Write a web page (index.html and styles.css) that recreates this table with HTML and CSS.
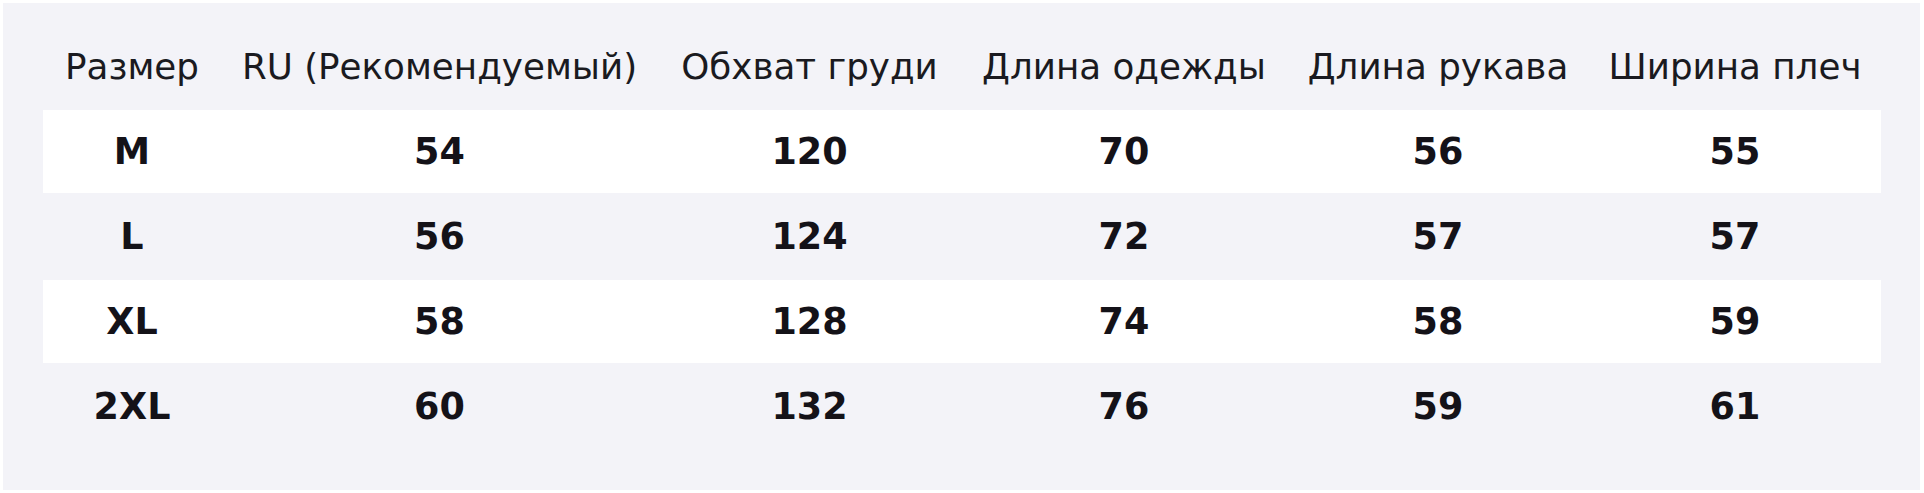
FILE: index.html
```html
<!DOCTYPE html>
<html lang="ru">
<head>
<meta charset="utf-8">
<title>Размерная таблица</title>
<link rel="stylesheet" href="styles.css">
</head>
<body>
<div class="panel">
  <table class="sizes">
    <colgroup>
      <col class="c-size">
      <col class="c-ru">
      <col class="c-chest">
      <col class="c-length">
      <col class="c-sleeve">
      <col class="c-shoulder">
    </colgroup>
    <thead>
      <tr>
        <th>Размер</th>
        <th>RU (Рекомендуемый)</th>
        <th>Обхват груди</th>
        <th>Длина одежды</th>
        <th>Длина рукава</th>
        <th>Ширина плеч</th>
      </tr>
    </thead>
    <tbody>
      <tr class="odd"><td>M</td><td>54</td><td>120</td><td>70</td><td>56</td><td>55</td></tr>
      <tr><td>L</td><td>56</td><td>124</td><td>72</td><td>57</td><td>57</td></tr>
      <tr class="odd"><td>XL</td><td>58</td><td>128</td><td>74</td><td>58</td><td>59</td></tr>
      <tr><td>2XL</td><td>60</td><td>132</td><td>76</td><td>59</td><td>61</td></tr>
    </tbody>
  </table>
</div>
</body>
</html>
```

FILE: styles.css
```css
html, body {
  margin: 0;
  padding: 0;
  background: #ffffff;
}

body {
  padding: 3px 4px 3px 3px;
  font-family: "DejaVu Sans", sans-serif;
  color: #16161c;
}

.panel {
  background: #f3f3f8;
  padding: 20px 39px 40px 40px;
  height: 487px;
  box-sizing: border-box;
}

.sizes {
  width: 1838px;
  table-layout: fixed;
  border-collapse: separate;
  border-spacing: 0 2px;
}

.c-size { width: 178px; }
.c-ru { width: 437px; }
.c-chest { width: 303px; }
.c-length { width: 326px; }
.c-sleeve { width: 302px; }
.c-shoulder { width: 292px; }

.sizes th,
.sizes td {
  height: 83px;
  padding: 0;
  text-align: center;
  vertical-align: middle;
  white-space: nowrap;
}

.sizes th {
  font-size: 35.7px;
  font-weight: normal;
  color: #1a1a20;
}

.sizes td {
  font-size: 36.5px;
  font-weight: bold;
  color: #141218;
}

.sizes tr.odd td {
  background: #ffffff;
}
```
